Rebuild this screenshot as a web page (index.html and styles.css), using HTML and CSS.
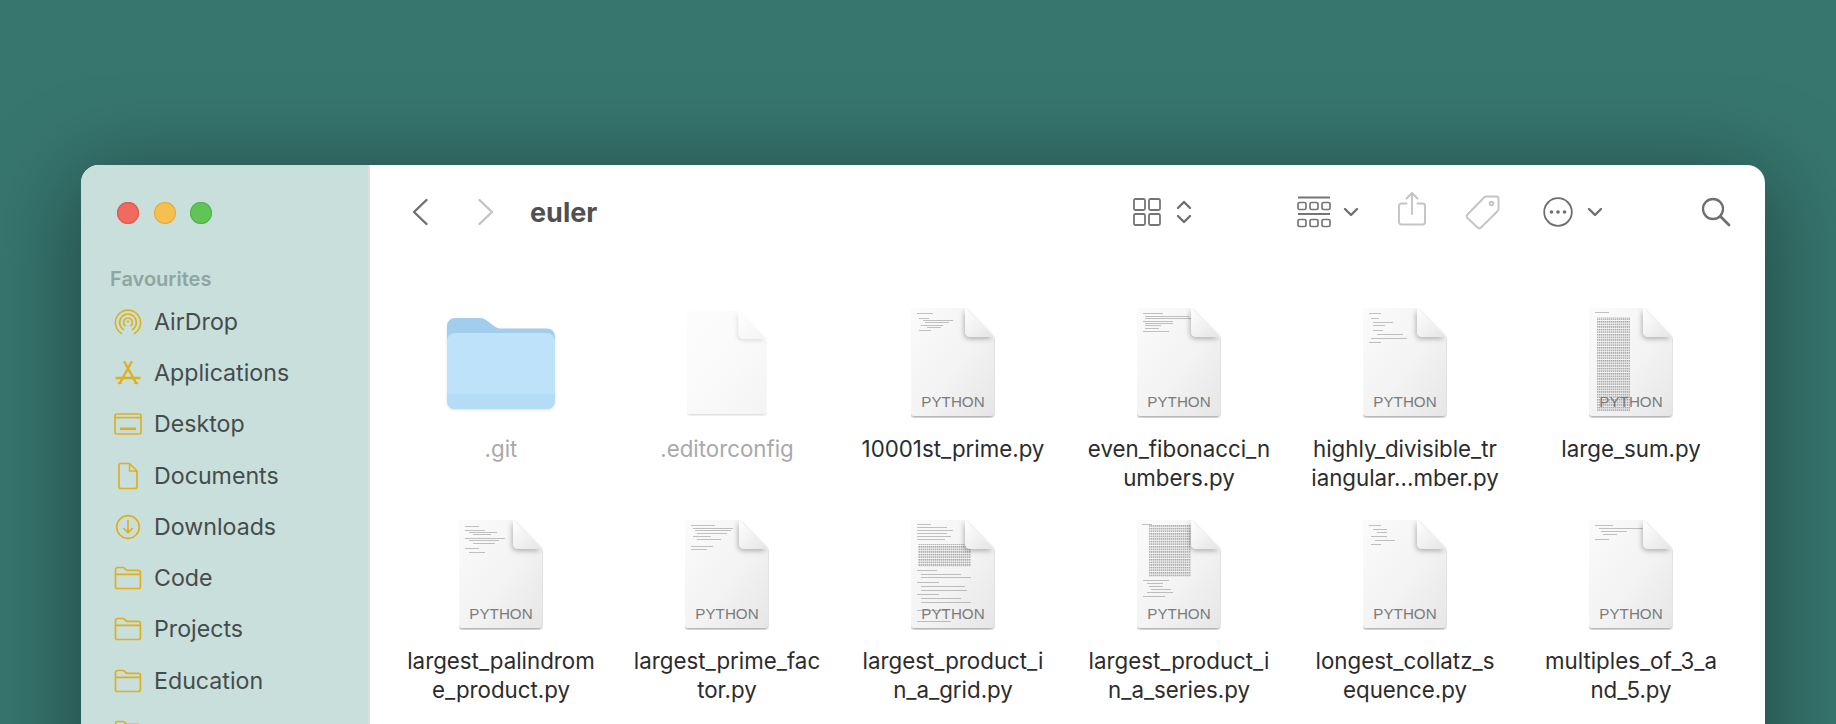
FILE: index.html
```html
<!DOCTYPE html>
<html lang="en">
<head>
<meta charset="utf-8">
<title>euler</title>
<link rel="stylesheet" href="styles.css">
</head>
<body>
<svg class="defs" width="0" height="0" aria-hidden="true">
  <defs>
    <linearGradient id="paper" x1="0" y1="0" x2="1" y2="1"><stop offset="0" stop-color="#fbfbfb"/><stop offset=".55" stop-color="#f3f3f3"/><stop offset="1" stop-color="#e6e6e6"/></linearGradient>
    <linearGradient id="fold" x1="0" y1="0" x2="1" y2="1"><stop offset="0" stop-color="#ffffff"/><stop offset="1" stop-color="#e4e4e4"/></linearGradient>
    <filter id="sh" x="-20%" y="-20%" width="140%" height="140%"><feDropShadow dx="0" dy="1.5" stdDeviation="1.2" flood-color="#000" flood-opacity=".35"/></filter>
    <filter id="fs" x="-40%" y="-40%" width="180%" height="180%"><feDropShadow dx="-1" dy="2" stdDeviation="2.500" flood-color="#000" flood-opacity=".28"/></filter>
    <filter id="soft" x="-5%" y="-5%" width="110%" height="110%"><feGaussianBlur stdDeviation=".5"/></filter>
    <pattern id="dense" width="2" height="2.600" patternUnits="userSpaceOnUse"><rect width="1.500" height="1.500" fill="#666"/></pattern>
    <symbol id="doc" viewBox="0 0 84 110">
      <path d="M4 0H54L83 29V104a4 4 0 0 1-4 4H4a4 4 0 0 1-4-4V4a4 4 0 0 1 4-4z" fill="url(#paper)" filter="url(#sh)"/>
    </symbol>
    <symbol id="corner" viewBox="0 0 84 110">
      <path d="M54 0L83 29H59a5 5 0 0 1-5-5z" fill="url(#fold)" filter="url(#fs)"/>
    </symbol>
    <symbol id="folder-small" viewBox="0 0 28 24">
      <path d="M1.500 5V3.500a2 2 0 0 1 2-2h5.200c1 0 1.500.4 2.200 1.100l1 1.100c.5.5.9.7 1.600.7h10.900a2 2 0 0 1 2 2V20.500a2 2 0 0 1-2 2H3.500a2 2 0 0 1-2-2zM1.500 8.300h25" fill="none" stroke="#deb01e" stroke-width="1.700" stroke-linejoin="round"/>
    </symbol>
  </defs>
</svg>
<div class="window">
  <aside class="sidebar">
    <div class="lights"><span class="light red"></span><span class="light amber"></span><span class="light green"></span></div>
    <div class="section">Favourites</div>
    <div class="item">
      <svg class="side-icon" viewBox="0 0 28 28" fill="none" stroke="#deb01e" stroke-width="1.600" stroke-linecap="round"><path d="M7.500 25.500A12.600 12.600 0 1 1 20.500 25.500"/><path d="M9.500 21.500a8.400 8.400 0 1 1 9 0"/><path d="M11.200 17.800a4.400 4.400 0 1 1 5.600 0"/><circle cx="14" cy="13.600" r="1.200" fill="#deb01e" stroke="none"/></svg>
      <span>AirDrop</span>
    </div>
    <div class="item">
      <svg class="side-icon" viewBox="0 0 28 28" fill="none" stroke="#deb01e" stroke-width="2.400" stroke-linecap="round"><path d="M10.500 3l11 20"/><path d="M17.500 3L6.500 23"/><path d="M2.500 19h23"/><path d="M5 24h1.500M21.500 24h1.500"/></svg>
      <span>Applications</span>
    </div>
    <div class="item">
      <svg class="side-icon wide" viewBox="0 0 28 22" fill="none" stroke="#deb01e" stroke-width="1.600"><rect x="1" y="1" width="26" height="20" rx="2"/><path d="M1 4.600h26"/><rect x="6" y="14.500" width="16" height="2.600" fill="#deb01e" stroke="none"/></svg>
      <span>Desktop</span>
    </div>
    <div class="item">
      <svg class="side-icon" viewBox="0 0 28 28" fill="none" stroke="#deb01e" stroke-width="1.700" stroke-linejoin="round"><path d="M5 3.500a2 2 0 0 1 2-2h8.500L23 9v15.500a2 2 0 0 1-2 2H7a2 2 0 0 1-2-2z"/><path d="M15.500 1.500V9H23" stroke-width="1.500"/></svg>
      <span>Documents</span>
    </div>
    <div class="item">
      <svg class="side-icon" viewBox="0 0 28 28" fill="none" stroke="#deb01e" stroke-width="1.700" stroke-linecap="round" stroke-linejoin="round"><circle cx="14" cy="14" r="11.300"/><path d="M14 7.500v12M9.800 15.500l4.200 4.200 4.200-4.200"/></svg>
      <span>Downloads</span>
    </div>
    <div class="item"><svg class="side-icon wide"><use href="#folder-small"/></svg><span>Code</span></div>
    <div class="item"><svg class="side-icon wide"><use href="#folder-small"/></svg><span>Projects</span></div>
    <div class="item"><svg class="side-icon wide"><use href="#folder-small"/></svg><span>Education</span></div>
    <div class="item"><svg class="side-icon wide"><use href="#folder-small"/></svg><span></span></div>
  </aside>
  <main class="main">
    <header class="toolbar">
      <svg class="tb back" viewBox="0 0 16 28" fill="none" stroke="#6f6f6f" stroke-width="2.400" stroke-linecap="round" stroke-linejoin="round"><path d="M14.500 2L2 14l12.500 12"/></svg>
      <svg class="tb forward" viewBox="0 0 16 28" fill="none" stroke="#c2c2c2" stroke-width="2.400" stroke-linecap="round" stroke-linejoin="round"><path d="M1.500 2L14 14 1.500 26"/></svg>
      <h1 class="title">euler</h1>
      <svg class="tb grid-ic" viewBox="0 0 28 28" fill="none" stroke="#757575" stroke-width="1.800"><rect x="1" y="1" width="11" height="11" rx="1.500"/><rect x="16" y="1" width="11" height="11" rx="1.500"/><rect x="1" y="16" width="11" height="11" rx="1.500"/><rect x="16" y="16" width="11" height="11" rx="1.500"/></svg>
      <svg class="tb updown" viewBox="0 0 16 26" fill="none" stroke="#6f6f6f" stroke-width="2.400" stroke-linecap="round" stroke-linejoin="round"><path d="M2 9l6-6 6 6M2 17l6 6 6-6"/></svg>
      <svg class="tb group" viewBox="0 0 34 32" fill="none" stroke="#757575" stroke-width="1.700"><path d="M1 1.500h32M1 18h32" stroke-width="1.800"/><rect x="1" y="6.500" width="8" height="7" rx="1.500"/><rect x="13" y="6.500" width="8" height="7" rx="1.500"/><rect x="25" y="6.500" width="8" height="7" rx="1.500"/><rect x="1" y="23.500" width="8" height="7" rx="1.500"/><rect x="13" y="23.500" width="8" height="7" rx="1.500"/><rect x="25" y="23.500" width="8" height="7" rx="1.500"/></svg>
      <svg class="tb chev c1" viewBox="0 0 16 10" fill="none" stroke="#6f6f6f" stroke-width="2.400" stroke-linecap="round" stroke-linejoin="round"><path d="M2 2l6 6 6-6"/></svg>
      <svg class="tb share" viewBox="0 0 28 36" fill="none" stroke="#c4c4c4" stroke-width="1.900" stroke-linecap="round" stroke-linejoin="round"><path d="M8.500 12.500H3.500a2.500 2.500 0 0 0-2.500 2.500v16a2.500 2.500 0 0 0 2.500 2.500h21a2.500 2.500 0 0 0 2.500-2.500V15a2.500 2.500 0 0 0-2.500-2.500H19.500"/><path d="M14 23V2M8.500 7.500L14 2l5.500 5.500"/></svg>
      <svg class="tb tag" viewBox="0 0 36 36" fill="none" stroke="#c4c4c4" stroke-width="1.900" stroke-linejoin="round"><path d="M2.500 20.500L19 3.500a3 3 0 0 1 2.200-1h10.300a2 2 0 0 1 2 2V15a3 3 0 0 1-1 2.200L16 33.500a2.500 2.500 0 0 1-3.500 0L2.500 24a2.500 2.500 0 0 1 0-3.500z"/><circle cx="26.500" cy="9.500" r="1.800"/></svg>
      <svg class="tb more" viewBox="0 0 30 30" fill="none" stroke="#6f6f6f" stroke-width="1.800"><circle cx="15" cy="15" r="13.800"/><circle cx="8.500" cy="15" r="1.800" fill="#6f6f6f" stroke="none"/><circle cx="15" cy="15" r="1.800" fill="#6f6f6f" stroke="none"/><circle cx="21.500" cy="15" r="1.800" fill="#6f6f6f" stroke="none"/></svg>
      <svg class="tb chev c2" viewBox="0 0 16 10" fill="none" stroke="#6f6f6f" stroke-width="2.400" stroke-linecap="round" stroke-linejoin="round"><path d="M2 2l6 6 6-6"/></svg>
      <svg class="tb search" viewBox="0 0 30 30" fill="none" stroke="#6f6f6f" stroke-width="2.300" stroke-linecap="round"><circle cx="12" cy="12" r="10"/><path d="M19.500 19.500l8.500 8.500" stroke-width="2.800"/></svg>
    </header>
    <section class="files">
      <figure class="cell hidden-file">
        <div class="icon-box">
          <svg class="folder" viewBox="0 0 108 91"><path d="M8 0H32c4 0 6 1 9 3.500l6 4.500c2.500 2 4.500 2.500 8 2.500H100a8 8 0 0 1 8 8V60H0V8a8 8 0 0 1 8-8z" fill="#a3cdec"/><path d="M8 15H100a8 8 0 0 1 8 8V83a8 8 0 0 1-8 8H8a8 8 0 0 1-8-8V23a8 8 0 0 1 8-8z" fill="#bde2f9"/><path d="M0 76H108V83a8 8 0 0 1-8 8H8a8 8 0 0 1-8-8z" fill="#b4dcf6"/></svg>
        </div>
        <figcaption>.git</figcaption>
      </figure>
      <figure class="cell hidden-file">
        <div class="icon-box">
          <div class="doc faint"><svg class="doc-art" viewBox="0 0 84 110"><use href="#doc"/><use href="#corner"/></svg></div>
        </div>
        <figcaption>.editorconfig</figcaption>
      </figure>
      <figure class="cell">
        <div class="icon-box"><div class="doc"><svg class="doc-art" viewBox="0 0 84 110"><use href="#doc"/><g class="thumb" filter="url(#soft)"><rect x="6" y="5" width="16" height=".8"/><rect x="8" y="10" width="10" height=".8"/><rect x="12" y="12" width="30" height=".8"/><rect x="14" y="14" width="24" height=".8"/><rect x="10" y="17" width="22" height=".8"/><rect x="16" y="19" width="14" height=".8"/><rect x="8" y="22" width="12" height=".8"/></g><use href="#corner"/></svg><span class="kind">PYTHON</span></div></div>
        <figcaption>10001st_prime.py</figcaption>
      </figure>
      <figure class="cell">
        <div class="icon-box"><div class="doc"><svg class="doc-art" viewBox="0 0 84 110"><use href="#doc"/><g class="thumb" filter="url(#soft)"><rect x="6" y="5" width="20" height=".8"/><rect x="8" y="8" width="44" height=".8"/><rect x="8" y="10" width="46" height=".8"/><rect x="6" y="13" width="30" height=".8"/><rect x="8" y="15" width="28" height=".8"/><rect x="8" y="17" width="16" height=".8"/><rect x="8" y="20" width="14" height=".8"/><rect x="6" y="23" width="26" height=".8"/></g><use href="#corner"/></svg><span class="kind">PYTHON</span></div></div>
        <figcaption>even_fibonacci_n<br>umbers.py</figcaption>
      </figure>
      <figure class="cell">
        <div class="icon-box"><div class="doc"><svg class="doc-art" viewBox="0 0 84 110"><use href="#doc"/><g class="thumb" filter="url(#soft)"><rect x="6" y="5" width="12" height=".8"/><rect x="8" y="10" width="8" height=".8"/><rect x="10" y="14" width="20" height=".8"/><rect x="10" y="17" width="12" height=".8"/><rect x="10" y="22" width="10" height=".8"/><rect x="14" y="26" width="26" height=".8"/><rect x="8" y="30" width="36" height=".8"/><rect x="6" y="34" width="12" height=".8"/></g><use href="#corner"/></svg><span class="kind">PYTHON</span></div></div>
        <figcaption>highly_divisible_tr<br>iangular...mber.py</figcaption>
      </figure>
      <figure class="cell">
        <div class="icon-box"><div class="doc"><svg class="doc-art" viewBox="0 0 84 110"><use href="#doc"/><g class="thumb" filter="url(#soft)"><rect x="6" y="4" width="14" height=".8"/><rect x="8" y="9" width="33" height="95" fill="url(#dense)"/></g><use href="#corner"/></svg><span class="kind">PYTHON</span></div></div>
        <figcaption>large_sum.py</figcaption>
      </figure>
      <figure class="cell">
        <div class="icon-box"><div class="doc"><svg class="doc-art" viewBox="0 0 84 110"><use href="#doc"/><g class="thumb" filter="url(#soft)"><rect x="6" y="6" width="14" height=".8"/><rect x="6" y="10" width="20" height=".8"/><rect x="10" y="12" width="28" height=".8"/><rect x="14" y="14" width="18" height=".8"/><rect x="6" y="18" width="40" height=".8"/><rect x="10" y="20" width="30" height=".8"/><rect x="14" y="23" width="22" height=".8"/><rect x="6" y="28" width="14" height=".8"/><rect x="10" y="32" width="16" height=".8"/></g><use href="#corner"/></svg><span class="kind">PYTHON</span></div></div>
        <figcaption>largest_palindrom<br>e_product.py</figcaption>
      </figure>
      <figure class="cell">
        <div class="icon-box"><div class="doc"><svg class="doc-art" viewBox="0 0 84 110"><use href="#doc"/><g class="thumb" filter="url(#soft)"><rect x="6" y="5" width="24" height=".8"/><rect x="8" y="8" width="40" height=".8"/><rect x="10" y="10" width="36" height=".8"/><rect x="12" y="13" width="30" height=".8"/><rect x="8" y="16" width="18" height=".8"/><rect x="12" y="19" width="24" height=".8"/><rect x="6" y="26" width="22" height=".8"/><rect x="6" y="29" width="16" height=".8"/></g><use href="#corner"/></svg><span class="kind">PYTHON</span></div></div>
        <figcaption>largest_prime_fac<br>tor.py</figcaption>
      </figure>
      <figure class="cell">
        <div class="icon-box"><div class="doc"><svg class="doc-art" viewBox="0 0 84 110"><use href="#doc"/><g class="thumb" filter="url(#soft)"><rect x="6" y="4" width="14" height=".8"/><rect x="6" y="7" width="30" height=".8"/><rect x="6" y="10" width="36" height=".8"/><rect x="6" y="13" width="30" height=".8"/><rect x="6" y="16" width="34" height=".8"/><rect x="6" y="19" width="28" height=".8"/><rect x="6" y="50" width="20" height=".8"/><rect x="10" y="54" width="40" height=".8"/><rect x="10" y="57" width="50" height=".8"/><rect x="6" y="62" width="22" height=".8"/><rect x="10" y="66" width="44" height=".8"/><rect x="10" y="70" width="46" height=".8"/><rect x="6" y="74" width="22" height=".8"/><rect x="10" y="78" width="40" height=".8"/><rect x="10" y="82" width="50" height=".8"/><rect x="6" y="90" width="30" height=".8"/><rect x="6" y="101" width="34" height=".8"/><rect x="7" y="24" width="53" height="23" fill="url(#dense)"/></g><use href="#corner"/></svg><span class="kind">PYTHON</span></div></div>
        <figcaption>largest_product_i<br>n_a_grid.py</figcaption>
      </figure>
      <figure class="cell">
        <div class="icon-box"><div class="doc"><svg class="doc-art" viewBox="0 0 84 110"><use href="#doc"/><g class="thumb" filter="url(#soft)"><rect x="5" y="4" width="10" height=".8"/><rect x="12" y="5" width="42" height="52" fill="url(#dense)"/><rect x="6" y="60" width="26" height=".8"/><rect x="10" y="63" width="16" height=".8"/><rect x="12" y="66" width="14" height=".8"/><rect x="14" y="69" width="20" height=".8"/><rect x="10" y="72" width="26" height=".8"/><rect x="6" y="76" width="22" height=".8"/></g><use href="#corner"/></svg><span class="kind">PYTHON</span></div></div>
        <figcaption>largest_product_i<br>n_a_series.py</figcaption>
      </figure>
      <figure class="cell">
        <div class="icon-box"><div class="doc"><svg class="doc-art" viewBox="0 0 84 110"><use href="#doc"/><g class="thumb" filter="url(#soft)"><rect x="6" y="5" width="12" height=".8"/><rect x="10" y="9" width="14" height=".8"/><rect x="14" y="12" width="10" height=".8"/><rect x="8" y="16" width="16" height=".8"/><rect x="12" y="20" width="20" height=".8"/><rect x="8" y="24" width="10" height=".8"/></g><use href="#corner"/></svg><span class="kind">PYTHON</span></div></div>
        <figcaption>longest_collatz_s<br>equence.py</figcaption>
      </figure>
      <figure class="cell">
        <div class="icon-box"><div class="doc"><svg class="doc-art" viewBox="0 0 84 110"><use href="#doc"/><g class="thumb" filter="url(#soft)"><rect x="6" y="5" width="18" height=".8"/><rect x="10" y="8" width="44" height=".8"/><rect x="12" y="11" width="26" height=".8"/><rect x="14" y="14" width="14" height=".8"/><rect x="6" y="19" width="14" height=".8"/></g><use href="#corner"/></svg><span class="kind">PYTHON</span></div></div>
        <figcaption>multiples_of_3_a<br>nd_5.py</figcaption>
      </figure>
    </section>
  </main>
</div>
</body>
</html>
```
FILE: styles.css
```css
* { box-sizing: border-box; }
html, body { height: 100%; margin: 0; }
body {
  background: #37766f;
  padding: 165px 0 0 81px;
  overflow: hidden;
  font-family: Inter, "Liberation Sans", sans-serif;
}
.defs { position: absolute; }
.window {
  width: 1684px;
  height: 700px;
  display: flex;
  border-radius: 18px 18px 0 0;
  overflow: hidden;
  background: #fff;
  box-shadow: 0 16px 90px 10px rgba(0, 0, 0, .36);
}
.sidebar {
  width: 289px;
  flex: none;
  background: #c9dfdc;
  border-right: 2px solid #dddedd;
  padding: 37px 0 0 0;
}
.lights { display: flex; gap: 14.500px; padding-left: 36px; }
.light { width: 22px; height: 22px; border-radius: 50%; }
.red { background: #ef6a5f; box-shadow: inset 0 0 0 1px #e0574d; }
.amber { background: #f7bf4f; box-shadow: inset 0 0 0 1px #e5ab3d; }
.green { background: #5fc655; box-shadow: inset 0 0 0 1px #52b34a; }
.section {
  margin: 44px 0 0 29px;
  font-size: 20px;
  line-height: 22px;
  font-weight: 600;
  color: #8ea5a2;
}
.item {
  display: flex;
  align-items: center;
  height: 51.300px;
  padding-left: 33px;
  color: #454c4c;
  font-size: 23.200px;
  font-weight: 400;
}
.section + .item { margin-top: 6px; }
.side-icon { width: 28px; height: 28px; margin-right: 12px; flex: none; }
.side-icon.wide { height: 24px; width: 28px; }
.main { flex: 1; min-width: 0; }
.toolbar {
  display: flex;
  align-items: center;
  height: 94px;
}
.tb { flex: none; }
.back { width: 16px; height: 28px; margin-left: 42px; }
.forward { width: 16px; height: 28px; margin-left: 50px; }
.title { margin: 0 0 0 36px; font-size: 27px; font-weight: 700; color: #505050; width: 603px; }
.grid-ic { width: 28px; height: 28px; }
.updown { width: 16px; height: 26px; margin-left: 15px; }
.group { width: 34px; height: 32px; margin-left: 105px; }
.chev { width: 16px; height: 10px; }
.c1 { margin-left: 12px; }
.share { width: 28px; height: 36px; margin-left: 39px; margin-top: -6px; }
.tag { width: 36px; height: 36px; margin-left: 39px; }
.more { width: 30px; height: 30px; margin-left: 42px; }
.c2 { margin-left: 14px; }
.search { width: 30px; height: 30px; margin-left: 98px; }
.files {
  display: grid;
  grid-template-columns: repeat(6, 226px);
  grid-auto-rows: 212px;
  padding: 44px 0 0 18px;
}
.cell {
  margin: 0;
  display: flex;
  flex-direction: column;
  align-items: center;
}
.icon-box {
  height: 120px;
  display: flex;
  align-items: center;
  justify-content: center;
}
.folder { width: 108px; height: 91px; display: block; filter: drop-shadow(0 1px 1px rgba(0, 0, 0, .12)); }
.doc { position: relative; width: 84px; height: 110px; }
.doc-art { display: block; width: 100%; height: 100%; overflow: visible; }
.doc.faint { width: 80px; height: 105px; opacity: .42; }
.thumb { fill: #777; opacity: .55; }
.kind {
  position: absolute;
  left: 0;
  right: 0;
  top: 85px;
  text-align: center;
  font-family: "Liberation Sans", sans-serif;
  font-size: 15.200px;
  line-height: 18px;
  color: #7b7b7b;
}
figcaption {
  margin-top: 11px;
  text-align: center;
  font-size: 22.300px;
  line-height: 29px;
  color: #2c2c2c;
  white-space: nowrap;
}
.hidden-file figcaption { color: #a9a9a9; }
```
